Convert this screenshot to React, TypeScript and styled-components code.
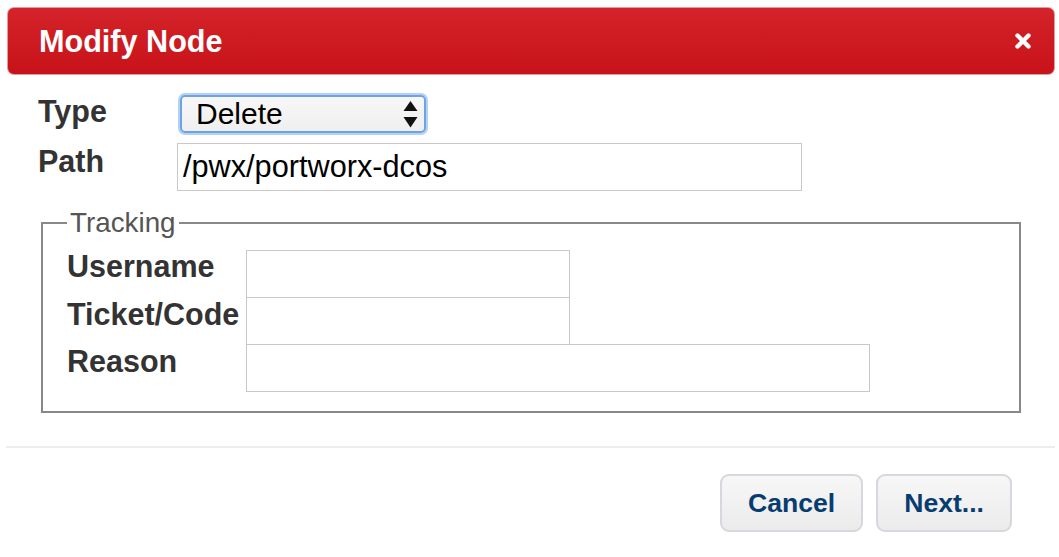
import styled, { createGlobalStyle } from "styled-components";

const GlobalStyle = createGlobalStyle`
  body {
    margin: 0;
    background: #fff;
    font-family: "Liberation Sans", Arial, Helvetica, sans-serif;
  }
`;

interface TextFieldProps {
  $width: number;
}

const App = () => {
  return (
    <Dialog>
      <GlobalStyle />
      <TitleBar>
        <Title>Modify Node</Title>
        <CloseButton aria-label="close">
          <svg width="18" height="18" viewBox="0 0 18 18">
            <path
              d="M3.5 3.5 L14.5 14.5 M14.5 3.5 L3.5 14.5"
              stroke="#fff"
              strokeWidth="4.4"
              strokeLinecap="round"
            />
          </svg>
        </CloseButton>
      </TitleBar>

      <Body>
        <MainGrid>
          <Label>Type</Label>
          <SelectBox>
            <span>Delete</span>
            <svg width="15" height="27" viewBox="0 0 15 27">
              <path d="M7.5 0 L14.5 10 L0.5 10 Z" fill="#111" />
              <path d="M0.5 16 L14.5 16 L7.5 26.5 Z" fill="#111" />
            </svg>
          </SelectBox>
          <Label $offset={1}>Path</Label>
          <TextField $width={625} defaultValue="/pwx/portworx-dcos" readOnly />
        </MainGrid>

        <Tracking>
          <Legend>Tracking</Legend>
          <TrackingGrid>
            <Label>Username</Label>
            <TextField $width={324} />
            <Label>Ticket/Code</Label>
            <TextField $width={324} />
            <Label>Reason</Label>
            <TextField $width={624} />
          </TrackingGrid>
        </Tracking>
      </Body>

      <Footer>
        <Button>Cancel</Button>
        <Button>Next...</Button>
      </Footer>
    </Dialog>
  );
};
export default App;

const Dialog = styled.div`
  width: 1059px;
  height: 557px;
  box-sizing: border-box;
  padding: 7px 4px 0 6px;
  background: #fff;
`;

const TitleBar = styled.div`
  display: flex;
  align-items: center;
  justify-content: space-between;
  height: 68px;
  box-sizing: border-box;
  margin-left: 1px;
  padding: 0 22px 0 31px;
  border: 1px solid #e59b9d;
  border-radius: 7px;
  background: linear-gradient(#d4232a, #c81219);
`;

const Title = styled.span`
  color: #fff;
  font-size: 30.6px;
  font-weight: 700;
`;

const CloseButton = styled.span`
  display: flex;
  width: 18px;
  height: 18px;
`;

const Body = styled.div`
  padding: 20px 0 0 32px;
`;

const MainGrid = styled.div`
  display: grid;
  grid-template-columns: 139px auto;
  grid-template-rows: 38px 47px;
  row-gap: 10px;
  align-items: start;
  justify-items: start;
`;

const Label = styled.label<{ $offset?: number }>`
  color: #333;
  font-size: 30.5px;
  font-weight: 700;
  line-height: 34px;
  margin-top: ${(p) => (p.$offset ? p.$offset : -1)}px;
  white-space: nowrap;
`;

const SelectBox = styled.div`
  display: flex;
  align-items: center;
  justify-content: space-between;
  width: 246px;
  height: 38px;
  box-sizing: border-box;
  margin-left: 3px;
  padding: 0 6px 0 14px;
  border: 2px solid #6ea2e2;
  border-radius: 5px;
  box-shadow: 0 0 0 2px #b3d2f5;
  background: linear-gradient(#f7f7f7, #efefef);
  color: #000;
  font-size: 30px;
`;

const TextField = styled.input<TextFieldProps>`
  width: ${(p) => p.$width}px;
  height: 48px;
  box-sizing: border-box;
  margin: 0;
  padding: 0 5px;
  border: 1px solid #c9c9c9;
  outline: none;
  background: #fff;
  color: #000;
  font-family: "Liberation Sans", Arial, sans-serif;
  font-size: 30.7px;
`;

const Tracking = styled.fieldset`
  width: 980px;
  box-sizing: border-box;
  margin: 17px 0 0 3px;
  padding: 12px 0 19px 24px;
  border: 2px solid #888;
  min-inline-size: 0;
`;

const Legend = styled.legend`
  padding: 0 3px;
  color: #555;
  font-size: 27.8px;
  line-height: 31px;
`;

const TrackingGrid = styled.div`
  display: grid;
  grid-template-columns: 179px auto;
  justify-items: start;
  align-items: start;

  & > input + label + input {
    margin-top: -1px;
  }
`;

const Footer = styled.div`
  display: flex;
  justify-content: flex-end;
  gap: 13px;
  margin-top: 33px;
  padding: 26px 43px 0 0;
  border-top: 2px solid #ededed;
`;

const Button = styled.button`
  height: 58px;
  box-sizing: border-box;
  padding: 0 26px;
  border: 2px solid #d5d8dc;
  border-radius: 9px;
  background: linear-gradient(#f7f7f7, #ebebeb);
  color: #073c70;
  font-family: "Liberation Sans", Arial, sans-serif;
  font-size: 26.6px;
  font-weight: 700;
  cursor: pointer;
`;
